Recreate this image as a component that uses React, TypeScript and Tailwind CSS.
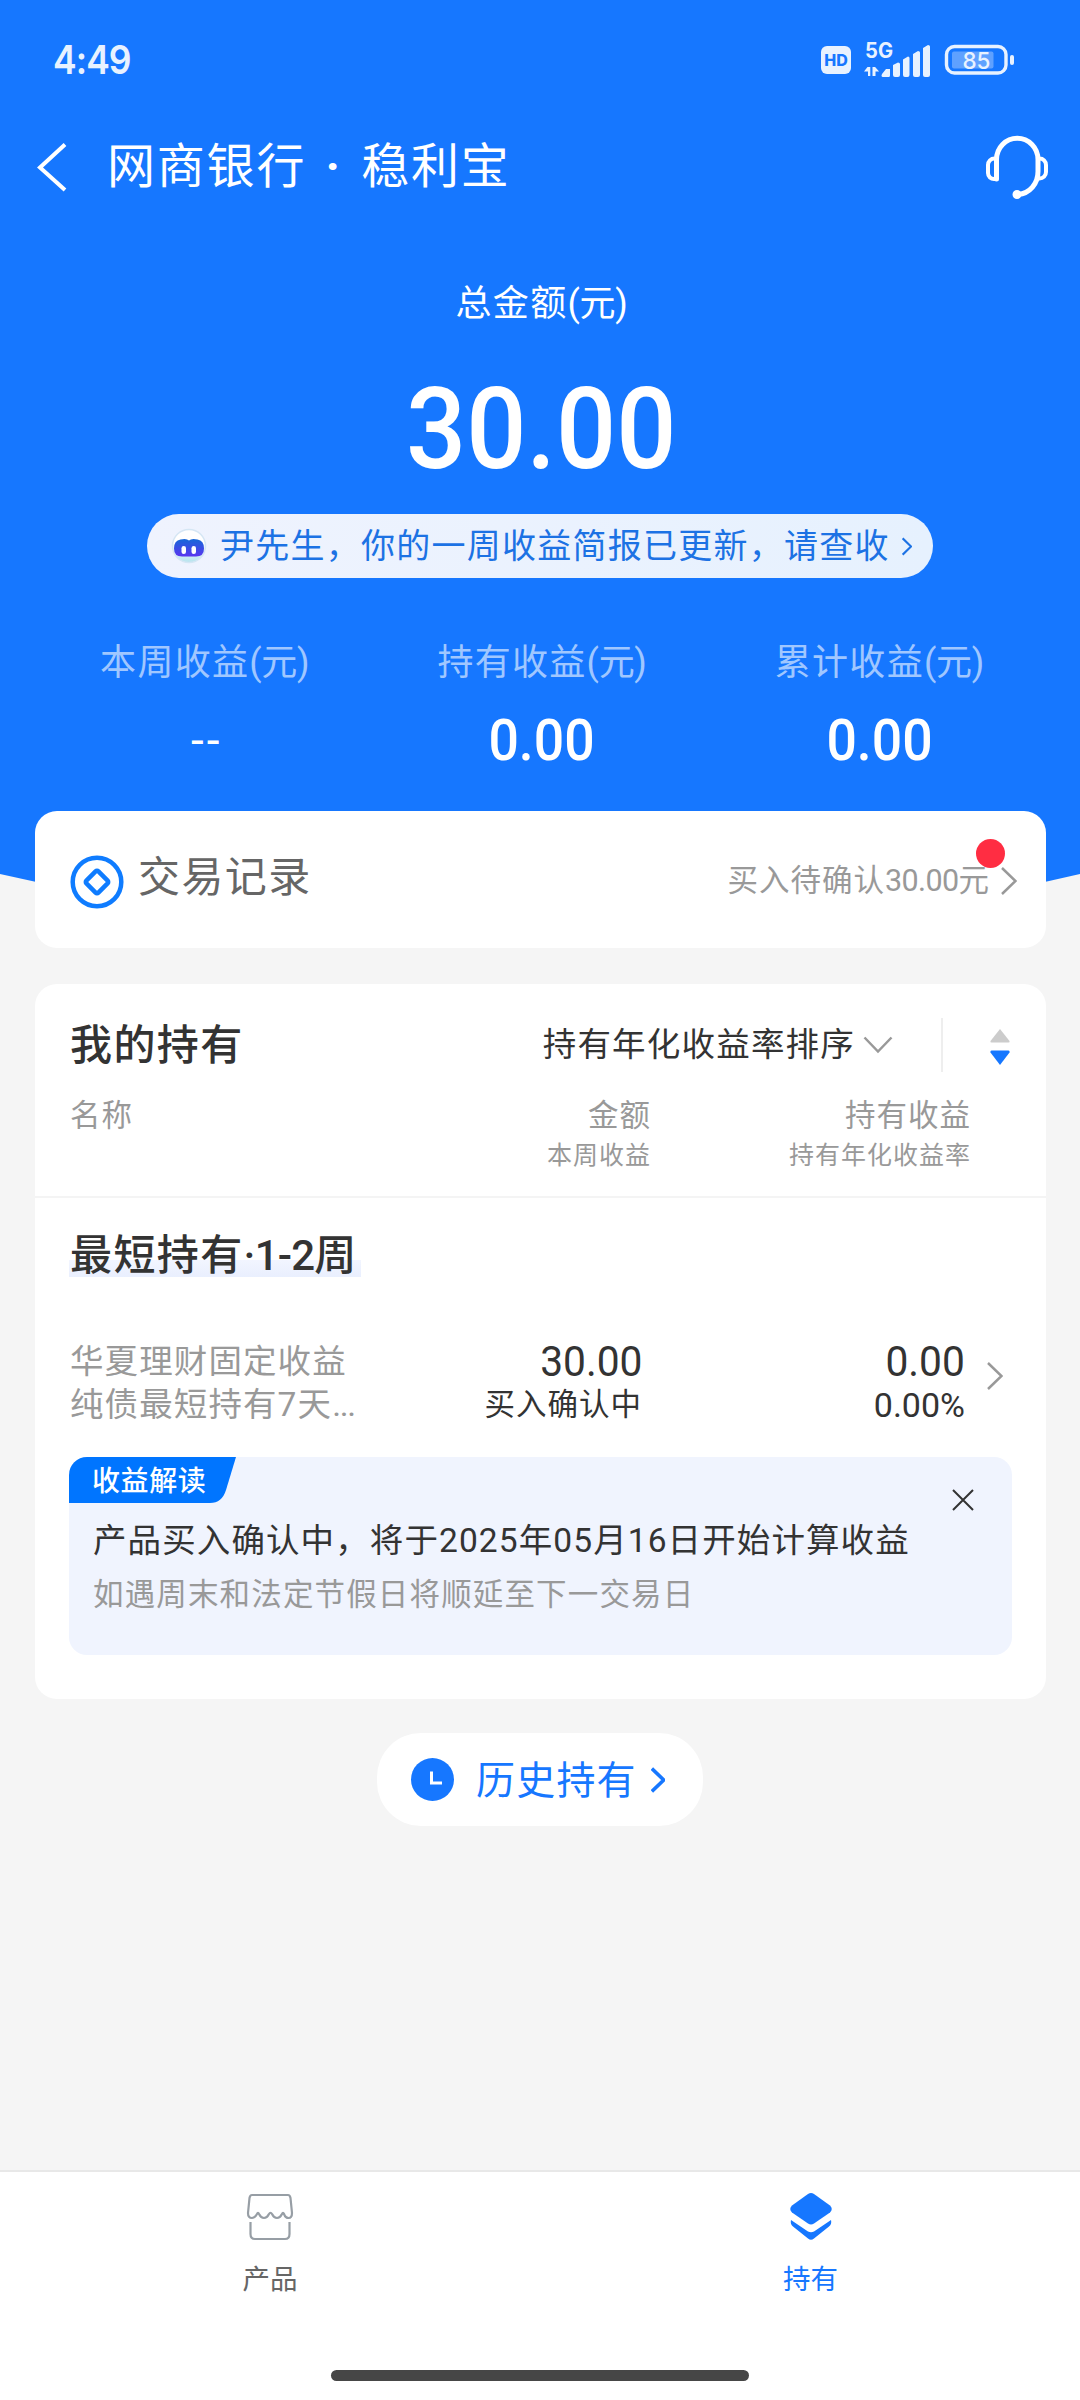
import React from 'react';

interface Stat {
  label: string;
  value: string;
}

const stats: Stat[] = [
  { label: '本周收益', value: '--' },
  { label: '持有收益', value: '0.00' },
  { label: '累计收益', value: '0.00' },
];

const ChevronRight: React.FC<{ className?: string; width?: number }> = ({ className, width = 2.5 }) => (
  <svg viewBox="0 0 16 28" className={className} fill="none" stroke="currentColor" strokeWidth={width}>
    <path d="M1 1l13.5 13L1 27" />
  </svg>
);

const Yuan = () => <span className="tracking-[-0.3px]">(元)</span>;

const StatusBar = () => (
  <div className="h-[119px] pl-[53px] pr-[66px] flex items-center justify-between text-[#e8f2ff]">
    <span className="font-[Inter] text-[39px] font-semibold leading-none tracking-[-1px] origin-left scale-x-[0.91]">4:49</span>
    <div className="flex items-center">
      <span className="w-[30px] h-[28px] rounded-[6px] bg-[#e8f2ff] text-[#1677ff] font-[Inter] text-[16px] font-extrabold flex items-center justify-center">
        HD
      </span>
      <svg width="68" height="40" viewBox="0 -4 68 40" className="ml-[12px] mb-[4px]" fill="currentColor">
        <text x="2" y="15.500" fontFamily="Inter" fontSize="21" fontWeight="700" textLength="28" lengthAdjust="spacingAndGlyphs">5G</text>
        <path d="M4.500 25h2.800v9h-2.300v-4.500h-4zM9.500 25h2.600l4 4.500h-3.600v4.500h-3z" />
        <path d="M19 32l4-5h4v6.500q0 1.500-1.500 1.500h-5.500q-1.500 0-1.500-1.500zM30 23l5-2.500q2 0 2 1.500v11q0 2-2 2h-3q-2 0-2-2zM40 17.500l5-3q1.500 0 1.500 1.500v17q0 2-2 2h-2.500q-2 0-2-2zM50 12l5-3q2 0 2 1.500v22.500q0 2-2 2h-3q-2 0-2-2zM60 6l5-3q2 0 2 1.500v28.500q0 2-2 2h-3q-2 0-2-2z" />
      </svg>
      <svg width="70" height="32" viewBox="0 0 70 32" className="ml-[13px]">
        <rect x="2.500" y="2.500" width="59.500" height="26.500" rx="8" fill="none" stroke="currentColor" strokeWidth="3.400" />
        <rect x="8" y="7.500" width="41.500" height="17" rx="2" fill="currentColor" opacity="0.35" />
        <text x="32.500" y="24.500" textAnchor="middle" fontFamily="Inter" fontSize="23.500" fontWeight="500" textLength="28" lengthAdjust="spacingAndGlyphs" fill="currentColor">85</text>
        <rect x="66" y="11" width="4" height="10" rx="2" fill="currentColor" />
      </svg>
    </div>
  </div>
);

const TitleBar = () => (
  <div className="h-[92px] pl-[36px] pr-[29px] flex items-center text-white">
    <svg width="32" height="50" viewBox="0 0 32 50" className="mt-[3px]" fill="none" stroke="currentColor" strokeWidth="4">
      <path d="M29 2.500L4 25.500L29 48" />
    </svg>
    <h1 className="ml-[39px] text-[48px] tracking-[1.8px] leading-[60px] whitespace-pre pt-[3px]">
      网商银行<span className="inline-block w-[55px] text-center font-bold">·</span>稳利宝
    </h1>
    <svg width="66" height="66" viewBox="0 0 66 66" className="ml-auto mt-[6px]" fill="none" stroke="currentColor" strokeWidth="5" strokeLinecap="round" strokeLinejoin="round">
      <path d="M11.500 44V24.500a20.500 21 0 0 1 41.500 0v12c0 12-8 22-20 23" />
      <path strokeWidth="4" d="M11 23.500H9.500a6.500 6.500 0 0 0-6.500 6.500v8a6 6 0 0 0 6.500 6H11" />
      <path strokeWidth="4" d="M53.500 23.500h1a6.500 6.500 0 0 1 6.500 6.500v7a6.500 6.500 0 0 1-6.500 6.500h-1" />
      <circle cx="32" cy="59.500" r="2" />
    </svg>
  </div>
);

const Robot = () => (
  <svg width="36" height="36" viewBox="0 0 36 36">
    <defs>
      <linearGradient id="face" x1="0" y1="0" x2="0" y2="1">
        <stop offset="0" stopColor="#1668d8" />
        <stop offset="1" stopColor="#5a35f0" />
      </linearGradient>
      <linearGradient id="head" x1="0" y1="0" x2="0" y2="1">
        <stop offset="0.4" stopColor="#ffffff" />
        <stop offset="1" stopColor="#b5e3ee" />
      </linearGradient>
    </defs>
    <circle cx="18" cy="18" r="16.500" fill="url(#head)" stroke="#d5e6f4" strokeWidth="1.500" />
    <path d="M9.500 11.500q6-1.500 8.500 1q2.500-2.500 8.500-1q6.500 1 6.500 9q0 8-8 8h-14q-8 0-8-8q0-8 6.500-9z" fill="url(#face)" />
    <rect x="10.500" y="18" width="4.500" height="8" rx="2.200" fill="#fff" />
    <rect x="20.500" y="18" width="4.500" height="8" rx="2.200" fill="#fff" />
  </svg>
);

const Summary = () => (
  <section className="flex flex-col items-center text-white">
    <p className="mt-[69px] pl-[3px] text-[36px] leading-[48px] tracking-[1.3px]">总金额<Yuan /></p>
    <p className="mt-[43px] pl-[3px] h-[116px] text-[114px] leading-[116px] font-[Roboto] font-medium scale-x-[0.93]">30.00</p>
    <button className="mt-[27px] w-[786px] h-[64px] pl-[24px] rounded-full bg-linear-to-r from-[#eff3fe] to-[#e6f1fe] flex items-center text-[#1c72e4]">
      <Robot />
      <span className="ml-[13px] text-[34px] tracking-[1.25px] leading-[64px] whitespace-nowrap">
        尹先生，你的一周收益简报已更新，请查收
      </span>
      <ChevronRight className="ml-[12px] w-[10px] h-[19px]" width={3.4} />
    </button>
    <div className="mt-[61px] w-full pl-[36px] pr-[32px] grid grid-cols-3 text-center">
      {stats.map(s => (
        <div key={s.label}>
          <p className="text-[36px] leading-[48px] tracking-[1.3px] text-white/60">{s.label}<Yuan /></p>
          <p className="mt-[24px] h-[59px] text-[57px] leading-[60px] font-[Roboto] font-medium">
            {s.value === '--' ? (
              <span className="block pl-[4px] -mt-px text-[46px] tracking-[3px] font-normal">{s.value}</span>
            ) : (
              <span className="inline-block scale-x-[0.94]">{s.value}</span>
            )}
          </p>
        </div>
      ))}
    </div>
  </section>
);

const RecordsCard = () => (
  <section className="mt-[41px] ml-[35px] mr-[34px] h-[137px] pl-[35px] pr-[29px] rounded-[22px] bg-white flex items-center">
    <svg width="54" height="54" viewBox="0 0 54 54" className="mt-[4px]" fill="none" stroke="#0f7cff" strokeWidth="4.500">
      <circle cx="27" cy="27" r="24.300" />
      <rect x="18.500" y="18.500" width="17" height="17" rx="2" transform="rotate(45 27 27)" />
    </svg>
    <span className="ml-[14px] mb-[4px] text-[42px] tracking-[1.4px] text-[#666]">交易记录</span>
    <div className="relative ml-auto mt-[3px] flex items-center text-[#999]">
      <span className="text-[30.5px] tracking-[1px] leading-[36px]">
        买入待确认<span className="tracking-[-0.6px]">30.00</span>元
      </span>
      <ChevronRight className="ml-[11px] w-[16px] h-[28px]" />
      <i className="absolute right-[12px] -top-[24px] w-[29px] h-[29px] rounded-full bg-[#ff2d42]" />
    </div>
  </section>
);

const NoticeBox = () => (
  <div className="mt-[32px] ml-[34px] mr-[34px] h-[198px] rounded-[18px] bg-[#f0f4fe] overflow-hidden">
    <div className="h-[46px] flex justify-between">
      <div className="relative w-[168px] h-[46px]">
        <svg width="168" height="46" viewBox="0 0 168 46" className="absolute inset-0">
          <path d="M0 0H167L157 33Q153 46 141 46H0z" fill="#0075ff" />
        </svg>
        <span className="relative block pl-[23px] text-[28px] tracking-[0.6px] leading-[49px] font-medium text-white">收益解读</span>
      </div>
      <svg width="22" height="22" viewBox="0 0 22 22" className="mt-[32px] mr-[38px]" stroke="#333" strokeWidth="2">
        <path d="M1 1l20 20M21 1L1 21" />
      </svg>
    </div>
    <p className="mt-[8px] pl-[24px] text-[33.5px] tracking-[1.1px] leading-[60px] text-[#333]">
      产品买入确认中，将于2025年05月16日开始计算收益
    </p>
    <p className="pl-[24px] text-[30.5px] tracking-[1.15px] leading-[48px] text-[#999]">
      如遇周末和法定节假日将顺延至下一交易日
    </p>
  </div>
);

const HoldingsCard = () => (
  <section className="mt-[36px] ml-[35px] mr-[34px] h-[715px] pt-[21px] rounded-[22px] bg-white text-[#333]">
    <div className="h-[80px] pl-[35px] pr-[35px] flex items-center">
      <h2 className="text-[42px] tracking-[1.4px] font-medium">我的持有</h2>
      <span className="ml-auto text-[33.5px] tracking-[1.2px]">持有年化收益率排序</span>
      <svg width="30" height="18" viewBox="0 0 30 18" className="ml-[8px]" fill="none" stroke="#999" strokeWidth="2.500">
        <path d="M1.500 1.500l13.500 14l13.500-14" />
      </svg>
      <i className="ml-[48px] w-[2px] h-[54px] bg-[#eee]" />
      <svg width="22" height="38" viewBox="0 0 22 38" className="ml-[46px] mt-[4px]">
        <path d="M11 1L20.500 13Q21 14.500 19.500 14.500H2.500Q1 14.500 1.500 13z" fill="#ccc" />
        <path d="M11 37L20.500 24.500Q21 22.500 19.500 22.500H2.500Q1 22.500 1.500 24.500z" fill="#1677ff" />
      </svg>
    </div>

    <div className="h-[113px] pt-[10px] pl-[35px] pr-[75px] flex border-b-2 border-[#f4f4f4] text-[#999] text-[30.5px] tracking-[1px] leading-[42px]">
      <span>名称</span>
      <div className="ml-auto text-right">
        <p>金额</p>
        <p className="text-[25px] leading-[38px]">本周收益</p>
      </div>
      <div className="w-[320px] text-right">
        <p>持有收益</p>
        <p className="text-[25px] leading-[38px]">持有年化收益率</p>
      </div>
    </div>

    <div className="mt-[28px] pl-[34px] h-[60px] flex">
      <h3 className="pl-px pr-[3px] h-[51px] text-[42px] tracking-[1.4px] leading-[60px] font-medium bg-linear-to-b from-transparent from-[67%] via-[#f2f5ff] via-[67%] to-[#e9effe]">
        最短持有<span className="tracking-[-0.8px]">·1-2</span>周
      </h3>
    </div>

    <div className="mt-[54px] h-[85px] pl-[35px] pr-[43px] flex leading-[43px]">
      <p className="text-[33.5px] tracking-[1.1px] text-[#999]">
        华夏理财固定收益
        <br />
        纯债最短持有7天<span className="tracking-[-1.3px]">...</span>
      </p>
      <div className="ml-auto text-right">
        <p className="text-[42px] font-[Roboto]">
          <span className="inline-block origin-right scale-x-[0.97]">30.00</span>
        </p>
        <p className="text-[30.5px] tracking-[1px]">买入确认中</p>
      </div>
      <div className="w-[323px] text-right font-[Roboto]">
        <p className="text-[42px]">
          <span className="inline-block origin-right scale-x-[0.97]">0.00</span>
        </p>
        <p className="text-[34px] leading-[45px]">
          <span className="inline-block origin-right">0.00%</span>
        </p>
      </div>
      <ChevronRight className="ml-[22px] mt-[22px] w-[16px] h-[28px] text-[#999]" />
    </div>

    <NoticeBox />
  </section>
);

const TabBar = () => (
  <nav className="mt-auto h-[230px] border-t-2 border-[#e8e8e8] bg-white flex flex-col items-center">
    <div className="w-full grid grid-cols-2 text-[27.5px] leading-[36px]">
      <button className="pt-[20px] flex flex-col items-center text-[#666]">
        <svg width="48" height="50" viewBox="0 0 48 50" fill="none" stroke="#979ea5" strokeWidth="2.200" strokeLinejoin="round">
          <path d="M6 3H42Q44 3 44.500 6L46 21Q46 26 42.500 26Q39.500 26 38 22Q37 19.500 36 22Q34 26 31 26Q28 26 26 22Q24.500 19.500 23 22Q21 26 18 26Q15 26 13 22Q12 19.500 11 22Q9 26 6 26Q2 26 2 21L3.500 6Q4 3 6 3z" />
          <path d="M4.500 30V42Q4.500 47 9 47H39Q43.500 47 43.500 42V30" />
        </svg>
        <span className="mt-[20px]">产品</span>
      </button>
      <button className="pt-[20px] pl-px flex flex-col items-center text-[#1677ff]">
        <svg width="44" height="50" viewBox="0 0 44 50" fill="currentColor">
          <path d="M19 2Q22 0 25 2L41 13.500Q44.500 17 41 20.500L25 31.500Q22 33.500 19 31.500L3 20.500Q-.5 17 3 13.500z" />
          <path d="M2 28Q1 32 4 34.500L19 46.500Q22 49 25 46.500L40 34.500Q43 32 42 28L25 39.500Q22 41 19 39.500z" />
        </svg>
        <span className="mt-[20px]">持有</span>
      </button>
    </div>
    <i className="mt-[72px] w-[418px] h-[11px] rounded-full bg-[#464646]" />
  </nav>
);

export default function App() {
  return (
    <div className="relative w-[1080px] h-[2400px] overflow-hidden bg-[#f5f5f5] font-[Roboto,'Noto_Sans_CJK_SC',sans-serif]">
      {/* Curved blue backdrop */}
      <svg width="1080" height="940" viewBox="0 0 1080 940" className="absolute top-0 left-0">
        <path d="M0 0H1080V874Q540 1000 0 874Z" fill="#1677ff" />
      </svg>
      <div className="relative h-full flex flex-col">
        <StatusBar />
        <TitleBar />
        <Summary />
        <RecordsCard />
        <HoldingsCard />
        <button className="mt-[34px] mx-auto w-[326px] h-[93px] pl-[34px] rounded-[44px] bg-white flex items-center text-[#1677ff]">
          <svg width="43" height="43" viewBox="0 0 43 43">
            <circle cx="21.500" cy="21.500" r="21.500" fill="currentColor" />
            <path d="M20.500 13.500V25H31" fill="none" stroke="#fff" strokeWidth="3" />
          </svg>
          <span className="ml-[22px] pt-[2px] text-[39px] tracking-[1.2px] leading-[50px]">历史持有</span>
          <ChevronRight className="ml-[14px] w-[14px] h-[26px]" width={4} />
        </button>
        <TabBar />
      </div>
    </div>
  );
}
